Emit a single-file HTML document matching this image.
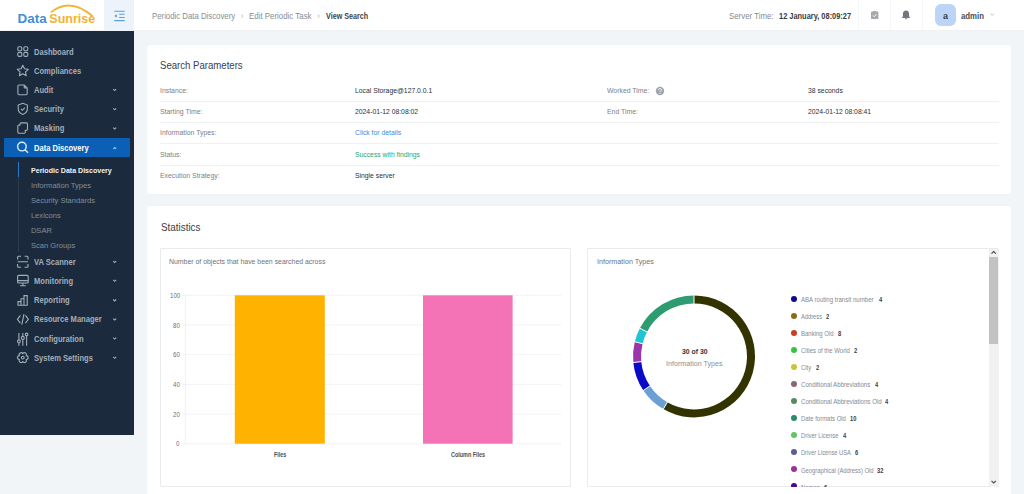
<!DOCTYPE html>
<html><head><meta charset="utf-8">
<style>
html,body{margin:0;padding:0;}
body{width:1024px;height:494px;overflow:hidden;position:relative;background:#f2f5f8;font-family:"Liberation Sans",sans-serif;}
.t{position:absolute;white-space:nowrap;line-height:1;transform-origin:0 50%;}
.dot{position:absolute;width:6px;height:6px;border-radius:50%;}
.abs{position:absolute;}
</style></head><body>
<!-- top bar -->
<div class="abs" style="left:0;top:0;width:1024px;height:31px;background:#fff;"></div>
<div class="abs" style="left:0;top:29.5px;width:1024px;height:1.5px;background:linear-gradient(#f5f6f8,#e9edf1);"></div>
<div class="abs" style="left:104px;top:0;width:30px;height:31px;background:#ecf3fb;"></div>
<!-- logo -->
<svg class="abs" style="left:0;top:0" width="104" height="31" viewBox="0 0 104 31">
  <path d="M50.8 12.4 Q70 -3 92.6 16.2" fill="none" stroke="#f2b538" stroke-width="1.8"/>
  <text x="17.6" y="22.7" font-family="Liberation Sans" font-weight="bold" font-size="12.6" fill="#3f8fd8" textLength="29" lengthAdjust="spacingAndGlyphs">Data</text>
  <text x="49.3" y="22.7" font-family="Liberation Sans" font-weight="bold" font-size="12.6" fill="#f1b234" textLength="46" lengthAdjust="spacingAndGlyphs">Sunrise</text>
</svg>
<!-- toggle icon -->
<svg class="abs" style="left:104px;top:0" width="30" height="31" viewBox="104 0 30 31">
  <g stroke="#5aa2dc" stroke-width="1.1" fill="none">
    <path d="M114.3 11.2h10.4M119.1 14.3h5.6M119.1 17.5h5.6M114.3 20.6h10.4"/>
  </g>
  <path d="M114.4 15.9l2.3-1.7v3.4z" fill="#4f8fc4"/>
</svg>
<!-- top right separators -->
<div class="abs" style="left:858px;top:0;width:1px;height:30px;background:#f5f6f8;"></div>
<div class="abs" style="left:890px;top:0;width:1px;height:30px;background:#f5f6f8;"></div>
<div class="abs" style="left:922px;top:0;width:1px;height:30px;background:#f5f6f8;"></div>
<!-- clipboard icon -->
<svg class="abs" style="left:860px;top:0" width="30" height="30" viewBox="860 0 30 30">
  <rect x="871" y="11.6" width="7.4" height="7.5" rx="0.9" fill="#a5a9ae"/>
  <rect x="873" y="10.9" width="3.4" height="1.6" rx="0.5" fill="#a5a9ae"/>
  <path d="M872.9 15.4l1.3 1.3 2.3-2.4" stroke="#fff" stroke-width="0.95" fill="none"/>
</svg>
<!-- bell icon -->
<svg class="abs" style="left:891px;top:0" width="30" height="30" viewBox="891 0 30 30">
  <path d="M906 10.5c-1.9 0-3.1 1.5-3.1 3.4v2.5l-1.1 1.6h8.4l-1.1-1.6v-2.5c0-1.9-1.2-3.4-3.1-3.4z" fill="#71777d"/>
  <path d="M904.9 18.3a1.1 1.1 0 0 0 2.2 0z" fill="#71777d"/>
</svg>
<!-- avatar -->
<div class="abs" style="left:935.1px;top:4.4px;width:20.9px;height:21.2px;border-radius:6px;background:#bcd5f7;"></div>
<svg class="abs" style="left:988px;top:12px" width="8" height="6" viewBox="0 0 8 6"><path d="M2.6 1.9l1.6 1.4 1.6-1.4" stroke="#a9aeb3" stroke-width="0.8" fill="none"/></svg>

<!-- sidebar -->
<div class="abs" style="left:0;top:31px;width:134px;height:403.6px;background:#1b2b3d;"></div>
<div class="abs" style="left:4.3px;top:137.6px;width:125.9px;height:19.2px;background:#0b60b5;border-radius:1px;"></div>
<div class="abs" style="left:17.8px;top:161.6px;width:1.1px;height:90.8px;background:#2c3c4f;"></div>
<div class="abs" style="left:17.8px;top:161.6px;width:1.3px;height:15.8px;background:#2f79c9;"></div>
<!-- sidebar icons -->
<svg class="abs" style="left:0;top:31px" width="134" height="340" viewBox="0 31 134 340">
 <g fill="none" stroke="#a3adb9" stroke-width="1.1">
  <!-- dashboard -->
  <rect x="17.8" y="46.8" width="4" height="4" rx="1.2"/><rect x="23.8" y="46.8" width="4" height="4" rx="1.2"/>
  <rect x="17.8" y="52.4" width="4" height="4" rx="1.2"/><rect x="23.8" y="52.4" width="4" height="4" rx="1.2"/>
  <!-- star -->
  <path d="M22.8 65.3l1.7 3.5 3.8.5-2.8 2.6.7 3.8-3.4-1.9-3.4 1.9.7-3.8-2.8-2.6 3.8-.5z" stroke-linejoin="round"/>
  <!-- audit doc -->
  <path d="M19 85h5.2l3 3v5.6a1.1 1.1 0 0 1-1.1 1.1h-7.1a1.1 1.1 0 0 1-1.1-1.1v-7.5a1.1 1.1 0 0 1 1.1-1.1zM24.2 85v2.2a.8.8 0 0 0 .8.8h2.2"/>
  <!-- security shield -->
  <path d="M22.8 103.3l4.6 1.8v3.3c0 3-2.1 5-4.6 6-2.5-1-4.6-3-4.6-6v-3.3z"/>
  <path d="M20.9 108.9l1.4 1.4 2.6-2.6"/>
  <!-- masking -->
  <path d="M20 125.1v-1a1.2 1.2 0 0 1 1.2-1.2h5.1a1.2 1.2 0 0 1 1.2 1.2v5.1a1.2 1.2 0 0 1-1.2 1.2h-1v1.6a1.2 1.2 0 0 1-1.2 1.2h-5.1a1.2 1.2 0 0 1-1.2-1.2v-5.7a1.2 1.2 0 0 1 1.2-1.2z" stroke-linejoin="round"/>
 </g>
 <!-- data discovery search (white) -->
 <g fill="none" stroke="#dbeeff" stroke-width="1.4">
  <circle cx="21.9" cy="146.6" r="4.3"/><path d="M25 149.8l3 3"/>
 </g>
 <g fill="none" stroke="#a3adb9" stroke-width="1.1">
  <!-- VA scanner -->
  <path d="M17.6 259.5v-2.2a1 1 0 0 1 1-1h2.4M24.6 256.3h2.4a1 1 0 0 1 1 1v2.2M28 264v2.2a1 1 0 0 1-1 1h-2.4M21 267.2h-2.4a1 1 0 0 1-1-1V264M17.6 261.8h10.4"/>
  <!-- monitoring -->
  <rect x="17.6" y="275.4" width="10.6" height="7.6" rx="1"/><path d="M22.9 283v2.6M20 285.8h5.8M17.6 280.6h10.6"/>
  <!-- reporting -->
  <path d="M18 305.2v-3.6h3v3.6zM21 305.2v-6.4h3v6.4zM24 305.2v-9.6h3.2v9.6z"/>
  <!-- resource manager </> -->
  <path d="M20.4 315.4l-3 3.9 3 3.9M25.4 315.4l3 3.9-3 3.9M24 314.2l-2.2 10.4"/>
  <!-- configuration -->
  <path d="M18.9 333v6.8M18.9 342.8v2.9M22.8 333v3.2M22.8 339.6v6.1M26.6 333v.1M26.6 336v9.7"/>
  <circle cx="18.9" cy="341.3" r="1.4"/><circle cx="22.8" cy="337.9" r="1.5"/><circle cx="26.6" cy="334.4" r="1.3"/>
  <!-- settings gear -->
  <circle cx="22.8" cy="357.6" r="1.4"/>
  <path d="M19.42 355.65A1.95 1.95 0 0 1 22.80 353.70A1.95 1.95 0 0 1 26.18 355.65A1.95 1.95 0 0 1 26.18 359.55A1.95 1.95 0 0 1 22.80 361.50A1.95 1.95 0 0 1 19.42 359.55A1.95 1.95 0 0 1 19.42 355.65Z" stroke-linejoin="round"/>
 </g>
 <!-- chevrons -->
 <g fill="none" stroke="#a3adb9" stroke-width="1.1">
  <path d="M113.2 89.2l1.5 1.4 1.5-1.4M113.2 108.4l1.5 1.4 1.5-1.4M113.2 127.6l1.5 1.4 1.5-1.4"/>
  <path d="M113.2 261.1l1.5 1.4 1.5-1.4M113.2 279.9l1.5 1.4 1.5-1.4M113.2 299.5l1.5 1.4 1.5-1.4M113.2 318.6l1.5 1.4 1.5-1.4M113.2 337.7l1.5 1.4 1.5-1.4M113.2 356.9l1.5 1.4 1.5-1.4"/>
 </g>
 <path d="M113.2 148.9l1.5-1.4 1.5 1.4" fill="none" stroke="#9fc8f2" stroke-width="1.1"/>
</svg>

<!-- card 1 -->
<div class="abs" style="left:146.8px;top:45px;width:864px;height:149.2px;background:#fff;border-radius:2px;box-shadow:0 0 1px rgba(0,0,0,.10);"></div>
<div class="abs" style="left:160px;top:101px;width:839px;height:1px;background:#f0f1f3;"></div>
<div class="abs" style="left:160px;top:122px;width:839px;height:1px;background:#f0f1f3;"></div>
<div class="abs" style="left:160px;top:143px;width:839px;height:1px;background:#f0f1f3;"></div>
<div class="abs" style="left:160px;top:165px;width:839px;height:1px;background:#f0f1f3;"></div>
<svg class="abs" style="left:654.6px;top:85.5px" width="10" height="10" viewBox="0 0 10 10">
  <circle cx="5" cy="5" r="4.2" fill="#a1a6ac"/>
  <path d="M3.6 3.9a1.4 1.4 0 1 1 2 1.3c-.5.2-.6.5-.6.9" stroke="#fff" stroke-width="0.9" fill="none"/>
  <circle cx="5" cy="7.3" r=".55" fill="#fff"/>
</svg>

<!-- card 2 -->
<div class="abs" style="left:146.8px;top:206.4px;width:864px;height:300px;background:#fff;border-radius:2px;box-shadow:0 0 1px rgba(0,0,0,.10);"></div>
<!-- chart box 1 -->
<div class="abs" style="left:160px;top:247.6px;width:408.8px;height:237.9px;border:1px solid #e9ebee;border-radius:1px;"></div>
<svg class="abs" style="left:0;top:0" width="1024" height="494">
  <g stroke="#eff0f2" stroke-width="0.8">
    <path d="M185 295.3H561.5M185 325H561.5M185 354.7H561.5M185 384.4H561.5M185 414.1H561.5M185 443.8H561.5"/>
    <path d="M185.3 295V444"/>
  </g>
  <path d="M182.5 295.3H185M182.5 325H185M182.5 354.7H185M182.5 384.4H185M182.5 414.1H185M182.5 443.8H185" stroke="#e6e8eb" stroke-width="0.8"/>
  <rect x="234.8" y="295.3" width="90" height="148.4" fill="#ffb300"/>
  <rect x="423" y="295.3" width="89.6" height="148.4" fill="#f472b6"/>
</svg>
<!-- chart box 2 -->
<div class="abs" style="left:587.1px;top:247.6px;width:410.4px;height:237.9px;border:1px solid #e9ebee;border-radius:1px;"></div>
<svg class="abs" style="left:0;top:0" width="1024" height="494">
  <path d="M694.00 295.40A61.0 61.0 0 1 1 663.32 409.12L667.34 402.21A53.0 53.0 0 1 0 694.00 303.40Z" fill="#333300"/>
  <path d="M663.32 409.12A61.0 61.0 0 0 1 643.37 390.42L650.01 385.96A53.0 53.0 0 0 0 667.34 402.21Z" fill="#6c9fd4"/>
  <path d="M643.37 390.42A61.0 61.0 0 0 1 633.30 362.46L641.26 361.66A53.0 53.0 0 0 0 650.01 385.96Z" fill="#0a0ac8"/>
  <path d="M633.30 362.46A61.0 61.0 0 0 1 634.79 341.75L642.55 343.67A53.0 53.0 0 0 0 641.26 361.66Z" fill="#9a35aa"/>
  <path d="M634.79 341.75A61.0 61.0 0 0 1 639.89 328.23L646.99 331.93A53.0 53.0 0 0 0 642.55 343.67Z" fill="#1fc4d6"/>
  <path d="M639.89 328.23A61.0 61.0 0 0 1 694.00 295.40L694.00 303.40A53.0 53.0 0 0 0 646.99 331.93Z" fill="#2f9b70"/>
  <path d="M694.00 294.90L694.00 303.90" stroke="#fff" stroke-width="1"/>
  <path d="M663.06 409.55L667.59 401.77" stroke="#fff" stroke-width="1"/>
  <path d="M642.95 390.70L650.42 385.68" stroke="#fff" stroke-width="1"/>
  <path d="M632.80 362.51L641.76 361.61" stroke="#fff" stroke-width="1"/>
  <path d="M634.30 341.63L643.04 343.79" stroke="#fff" stroke-width="1"/>
  <path d="M639.45 328.00L647.43 332.16" stroke="#fff" stroke-width="1"/>
</svg>
<!-- scrollbar -->
<div class="abs" style="left:988.7px;top:249px;width:10.3px;height:237.5px;background:#f1f1f1;"></div>
<div class="abs" style="left:988.7px;top:257px;width:9.8px;height:87px;background:#c2c2c2;"></div>
<svg class="abs" style="left:988px;top:248px" width="12" height="240" viewBox="0 0 12 240">
  <path d="M3.5 5.6l2.2-2.1 2.2 2.1" stroke="#4a4a4a" stroke-width="1.1" fill="none"/>
  <path d="M3.5 232.9l2.2 2.1 2.2-2.1" stroke="#4a4a4a" stroke-width="1.1" fill="none"/>
</svg>
<div class="abs" style="left:0;top:0;width:1024px;height:486.5px;overflow:hidden;">
<div class="t" style="top:12px;font-size:9px;color:#868c93;left:151.70px;transform:scaleX(0.866);">Periodic Data Discovery</div>
<div class="t" style="top:12px;font-size:9px;color:#b5babf;left:240.50px;">›</div>
<div class="t" style="top:12px;font-size:9px;color:#868c93;left:249.00px;transform:scaleX(0.876);">Edit Periodic Task</div>
<div class="t" style="top:12px;font-size:9px;color:#b5babf;left:317.10px;">›</div>
<div class="t" style="top:12px;font-size:9px;color:#40464c;font-weight:bold;left:325.60px;transform:scaleX(0.798);">View Search</div>
<div class="t" style="top:12px;font-size:9px;color:#868c93;left:728.90px;transform:scaleX(0.872);">Server Time:</div>
<div class="t" style="top:12px;font-size:9px;color:#363c42;font-weight:bold;left:778.50px;transform:scaleX(0.825);">12 January, 08:09:27</div>
<div class="t" style="top:12px;font-size:9px;color:#2c3d57;font-weight:bold;left:943.10px;">a</div>
<div class="t" style="top:12px;font-size:9px;color:#474d54;font-weight:bold;left:960.50px;transform:scaleX(0.864);">admin</div>
<div class="t" style="top:48px;font-size:8.5px;color:#a3adb9;font-weight:bold;left:34.40px;transform:scaleX(0.890);">Dashboard</div>
<div class="t" style="top:67px;font-size:8.5px;color:#a3adb9;font-weight:bold;left:34.40px;transform:scaleX(0.890);">Compliances</div>
<div class="t" style="top:86px;font-size:8.5px;color:#a3adb9;font-weight:bold;left:34.40px;transform:scaleX(0.890);">Audit</div>
<div class="t" style="top:105px;font-size:8.5px;color:#a3adb9;font-weight:bold;left:34.40px;transform:scaleX(0.890);">Security</div>
<div class="t" style="top:124px;font-size:8.5px;color:#a3adb9;font-weight:bold;left:34.40px;transform:scaleX(0.890);">Masking</div>
<div class="t" style="top:144px;font-size:8.5px;color:#ffffff;font-weight:bold;left:34.40px;transform:scaleX(0.890);">Data Discovery</div>
<div class="t" style="top:167px;font-size:7.6px;color:#eef1f4;font-weight:bold;left:30.90px;transform:scaleX(0.929);">Periodic Data Discovery</div>
<div class="t" style="top:182px;font-size:7.6px;color:#818d9a;left:30.90px;">Information Types</div>
<div class="t" style="top:197px;font-size:7.6px;color:#818d9a;left:30.90px;">Security Standards</div>
<div class="t" style="top:212px;font-size:7.6px;color:#818d9a;left:30.90px;">Lexicons</div>
<div class="t" style="top:227px;font-size:7.6px;color:#818d9a;left:30.90px;">DSAR</div>
<div class="t" style="top:242px;font-size:7.6px;color:#818d9a;left:30.90px;">Scan Groups</div>
<div class="t" style="top:258px;font-size:8.5px;color:#a3adb9;font-weight:bold;left:34.40px;transform:scaleX(0.890);">VA Scanner</div>
<div class="t" style="top:277px;font-size:8.5px;color:#a3adb9;font-weight:bold;left:34.40px;transform:scaleX(0.890);">Monitoring</div>
<div class="t" style="top:296px;font-size:8.5px;color:#a3adb9;font-weight:bold;left:34.40px;transform:scaleX(0.890);">Reporting</div>
<div class="t" style="top:315px;font-size:8.5px;color:#a3adb9;font-weight:bold;left:34.40px;transform:scaleX(0.890);">Resource Manager</div>
<div class="t" style="top:335px;font-size:8.5px;color:#a3adb9;font-weight:bold;left:34.40px;transform:scaleX(0.890);">Configuration</div>
<div class="t" style="top:354px;font-size:8.5px;color:#a3adb9;font-weight:bold;left:34.40px;transform:scaleX(0.890);">System Settings</div>
<div class="t" style="top:61px;font-size:10.3px;color:#3a4047;left:160.20px;transform:scaleX(0.932);">Search Parameters</div>
<div class="t" style="top:87px;font-size:7.4px;color:#7a8087;left:160.20px;transform:scaleX(0.930);">Instance:</div>
<div class="t" style="top:108px;font-size:7.4px;color:#7a8087;left:160.20px;transform:scaleX(0.930);">Starting Time:</div>
<div class="t" style="top:129px;font-size:7.4px;color:#7a8087;left:160.20px;transform:scaleX(0.930);">Information Types:</div>
<div class="t" style="top:151px;font-size:7.4px;color:#7a8087;left:160.20px;transform:scaleX(0.930);">Status:</div>
<div class="t" style="top:172px;font-size:7.4px;color:#7a8087;left:160.20px;transform:scaleX(0.930);">Execution Strategy:</div>
<div class="t" style="top:87px;font-size:7.4px;color:#2a3036;left:355.00px;transform:scaleX(0.920);">Local Storage@127.0.0.1</div>
<div class="t" style="top:108px;font-size:7.4px;color:#2a3036;left:355.00px;transform:scaleX(0.920);">2024-01-12 08:08:02</div>
<div class="t" style="top:129px;font-size:7.4px;color:#3b8ed6;left:355.00px;transform:scaleX(0.920);">Click for details</div>
<div class="t" style="top:151px;font-size:7.4px;color:#27a573;left:355.00px;transform:scaleX(0.920);">Success with findings</div>
<div class="t" style="top:172px;font-size:7.4px;color:#2a3036;left:355.00px;transform:scaleX(0.920);">Single server</div>
<div class="t" style="top:87px;font-size:7.4px;color:#7a8087;left:607.00px;transform:scaleX(0.930);">Worked Time:</div>
<div class="t" style="top:108px;font-size:7.4px;color:#7a8087;left:607.00px;transform:scaleX(0.930);">End Time:</div>
<div class="t" style="top:87px;font-size:7.4px;color:#2a3036;left:808.00px;transform:scaleX(0.920);">38 seconds</div>
<div class="t" style="top:108px;font-size:7.4px;color:#2a3036;left:808.00px;transform:scaleX(0.920);">2024-01-12 08:08:41</div>
<div class="t" style="top:223px;font-size:10.3px;color:#3a4047;left:160.50px;transform:scaleX(0.958);">Statistics</div>
<div class="t" style="top:258px;font-size:7.4px;color:#6c737a;left:169.10px;transform:scaleX(0.935);">Number of objects that have been searched across</div>
<div class="t" style="top:293px;font-size:6.8px;color:#6a7076;left:169.59px;transform:scaleX(0.900);">100</div>
<div class="t" style="top:323px;font-size:6.8px;color:#6a7076;left:172.99px;transform:scaleX(0.900);">80</div>
<div class="t" style="top:352px;font-size:6.8px;color:#6a7076;left:172.99px;transform:scaleX(0.900);">60</div>
<div class="t" style="top:382px;font-size:6.8px;color:#6a7076;left:172.99px;transform:scaleX(0.900);">40</div>
<div class="t" style="top:412px;font-size:6.8px;color:#6a7076;left:172.99px;transform:scaleX(0.900);">20</div>
<div class="t" style="top:441px;font-size:6.8px;color:#6a7076;left:176.40px;transform:scaleX(0.900);">0</div>
<div class="t" style="top:452px;font-size:6.8px;color:#4a5056;font-weight:bold;left:273.90px;transform:scaleX(0.800);">Files</div>
<div class="t" style="top:452px;font-size:6.8px;color:#4a5056;font-weight:bold;left:450.52px;transform:scaleX(0.800);">Column Files</div>
<div class="t" style="top:258px;font-size:7.4px;color:#6c737a;left:596.60px;transform:scaleX(0.971);">Information Types</div>
<div class="t" style="top:348px;font-size:8px;color:#2f353b;font-weight:bold;left:681.75px;transform:scaleX(0.856);">30 of 30</div>
<div class="t" style="top:360px;font-size:8px;color:#8a9097;left:666.00px;transform:scaleX(0.892);">Information Types</div>
<div class="t" style="top:296px;font-size:7px;color:#848a91;left:801.00px;transform:scaleX(0.867);">ABA routing transit number</div>
<div class="t" style="top:296px;font-size:7px;color:#3b4148;font-weight:bold;left:878.80px;transform:scaleX(0.820);">4</div>
<div class="dot" style="left:791.20px;top:295.55px;background:#0a0a8c"></div>
<div class="t" style="top:313px;font-size:7px;color:#848a91;left:801.00px;transform:scaleX(0.818);">Address</div>
<div class="t" style="top:313px;font-size:7px;color:#3b4148;font-weight:bold;left:826.40px;transform:scaleX(0.820);">2</div>
<div class="dot" style="left:791.20px;top:312.63px;background:#8e6a14"></div>
<div class="t" style="top:330px;font-size:7px;color:#848a91;left:801.00px;transform:scaleX(0.855);">Banking Old</div>
<div class="t" style="top:330px;font-size:7px;color:#3b4148;font-weight:bold;left:838.00px;transform:scaleX(0.820);">8</div>
<div class="dot" style="left:791.20px;top:329.71px;background:#c8401e"></div>
<div class="t" style="top:347px;font-size:7px;color:#848a91;left:801.00px;transform:scaleX(0.855);">Cities of the World</div>
<div class="t" style="top:347px;font-size:7px;color:#3b4148;font-weight:bold;left:854.20px;transform:scaleX(0.820);">2</div>
<div class="dot" style="left:791.20px;top:346.79px;background:#36c43e"></div>
<div class="t" style="top:364px;font-size:7px;color:#848a91;left:801.00px;transform:scaleX(0.846);">City</div>
<div class="t" style="top:364px;font-size:7px;color:#3b4148;font-weight:bold;left:815.80px;transform:scaleX(0.820);">2</div>
<div class="dot" style="left:791.20px;top:363.87px;background:#c9c43a"></div>
<div class="t" style="top:381px;font-size:7px;color:#848a91;left:801.00px;transform:scaleX(0.878);">Conditional Abbreviations</div>
<div class="t" style="top:381px;font-size:7px;color:#3b4148;font-weight:bold;left:875.20px;transform:scaleX(0.820);">4</div>
<div class="dot" style="left:791.20px;top:380.95px;background:#8a6478"></div>
<div class="t" style="top:398px;font-size:7px;color:#848a91;left:801.00px;transform:scaleX(0.879);">Conditional Abbreviations Old</div>
<div class="t" style="top:398px;font-size:7px;color:#3b4148;font-weight:bold;left:884.80px;transform:scaleX(0.820);">4</div>
<div class="dot" style="left:791.20px;top:398.03px;background:#5a8a62"></div>
<div class="t" style="top:415px;font-size:7px;color:#848a91;left:801.00px;transform:scaleX(0.849);">Date formats Old</div>
<div class="t" style="top:415px;font-size:7px;color:#3b4148;font-weight:bold;left:849.80px;transform:scaleX(0.820);">10</div>
<div class="dot" style="left:791.20px;top:415.11px;background:#2a8a6a"></div>
<div class="t" style="top:432px;font-size:7px;color:#848a91;left:801.00px;transform:scaleX(0.838);">Driver License</div>
<div class="t" style="top:432px;font-size:7px;color:#3b4148;font-weight:bold;left:843.00px;transform:scaleX(0.820);">4</div>
<div class="dot" style="left:791.20px;top:432.19px;background:#62c462"></div>
<div class="t" style="top:449px;font-size:7px;color:#848a91;left:801.00px;transform:scaleX(0.815);">Driver License USA</div>
<div class="t" style="top:449px;font-size:7px;color:#3b4148;font-weight:bold;left:855.20px;transform:scaleX(0.820);">6</div>
<div class="dot" style="left:791.20px;top:449.27px;background:#5c5c94"></div>
<div class="t" style="top:467px;font-size:7px;color:#848a91;left:801.00px;transform:scaleX(0.837);">Geographical (Address) Old</div>
<div class="t" style="top:467px;font-size:7px;color:#3b4148;font-weight:bold;left:877.20px;transform:scaleX(0.820);">32</div>
<div class="dot" style="left:791.20px;top:466.35px;background:#9a339a"></div>
<div class="t" style="top:484px;font-size:7px;color:#848a91;left:801.00px;transform:scaleX(0.839);">Names</div>
<div class="t" style="top:484px;font-size:7px;color:#3b4148;font-weight:bold;left:824.20px;transform:scaleX(0.820);">6</div>
<div class="dot" style="left:791.20px;top:483.43px;background:#4a0a8a"></div>
</div>
</body></html>
